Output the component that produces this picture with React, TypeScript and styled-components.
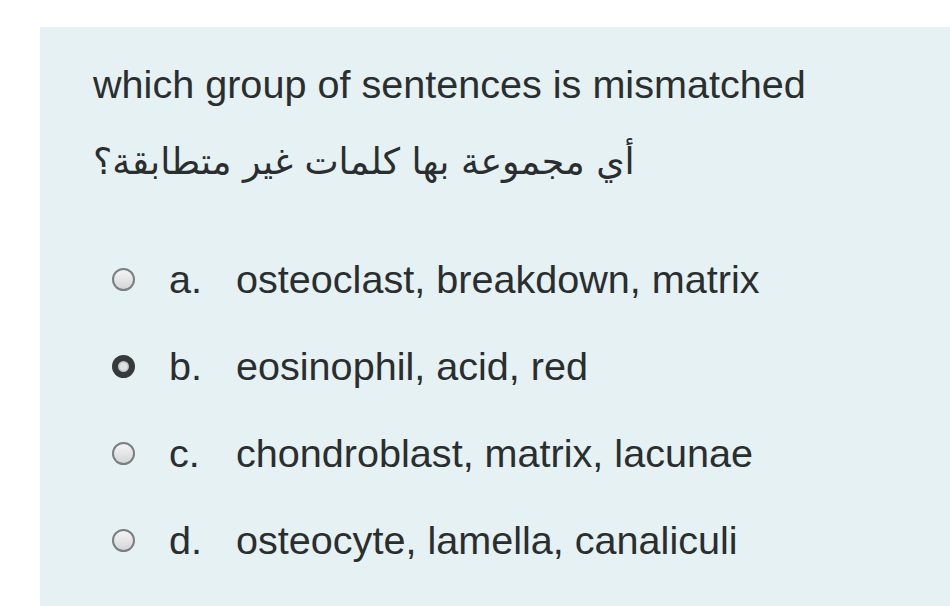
import React from "react";
import styled, { createGlobalStyle } from "styled-components";

const Global = createGlobalStyle`
  html, body { margin: 0; padding: 0; background: #ffffff; overflow: hidden; }
  body { font-family: "Liberation Sans", Arial, sans-serif; }
`;

const Page = styled.div`
  width: 950px;
  height: 606px;
  padding: 27px 0 0 40px;
  box-sizing: border-box;
  overflow: hidden;
`;

const Panel = styled.div`
  background: #e5f1f3;
  height: 640px;
  padding: 34px 0 0 53px;
  box-sizing: border-box;
  color: #2a2e2f;
`;

const Question = styled.div`
  font-size: 39.6px;
  line-height: 47px;
`;

const Arabic = styled.div`
  font-family: "DejaVu Sans", "Noto Sans", sans-serif;
  font-size: 36.3px;
  line-height: 56px;
  margin-top: 26px;
  direction: rtl;
  text-align: left;
  unicode-bidi: plaintext;
`;

const Options = styled.div`
  display: flex;
  flex-direction: column;
  gap: 40px;
  margin-top: 66px;
  padding-left: 19px;
`;

const Option = styled.label`
  display: flex;
  align-items: center;
  font-size: 39.6px;
  line-height: 47px;
`;

const Radio = styled.span<{ $checked?: boolean }>`
  width: 23px;
  height: 23px;
  border-radius: 50%;
  box-sizing: border-box;
  flex: none;
  margin-right: 34px;
  border: ${(p) => (p.$checked ? "6px solid #363a3b" : "2px solid #7a7f80")};
  background: ${(p) =>
    p.$checked
      ? "radial-gradient(circle, #dfe2e2 0 40%, #8f9495 100%)"
      : "linear-gradient(#f4f4f4, #d4d6d6)"};
`;

const Letter = styled.span`
  width: 67px;
  flex: none;
`;

const options = [
  { key: "a.", text: "osteoclast, breakdown, matrix" },
  { key: "b.", text: "eosinophil, acid, red", checked: true },
  { key: "c.", text: "chondroblast, matrix, lacunae" },
  { key: "d.", text: "osteocyte, lamella, canaliculi" },
];

export default function App() {
  return (
    <Page>
      <Global />
      <Panel>
        <Question>which group of sentences is mismatched</Question>
        <Arabic>
          <span dir="rtl">أي مجموعة بها كلمات غير متطابقة؟</span>
        </Arabic>
        <Options>
          {options.map((o) => (
            <Option key={o.key}>
              <Radio $checked={o.checked} />
              <Letter>{o.key}</Letter>
              <span>{o.text}</span>
            </Option>
          ))}
        </Options>
      </Panel>
    </Page>
  );
}
